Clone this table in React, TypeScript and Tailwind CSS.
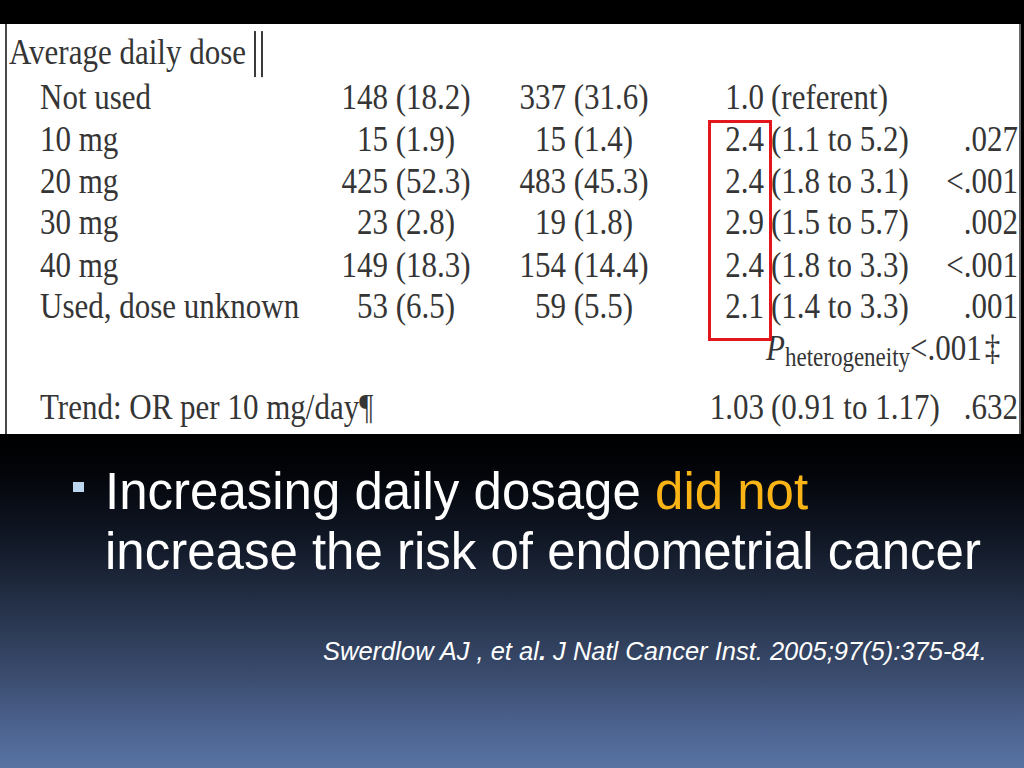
const serif = { fontFamily: '"Liberation Serif", "Times New Roman", serif' }

interface Row {
  label: string
  used: string
  controls: string
  or: string
  ci: string
  p: string
}

const rows: Row[] = [
  { label: 'Not used', used: '148 (18.2)', controls: '337 (31.6)', or: '1.0', ci: '(referent)', p: '' },
  { label: '10 mg', used: '15 (1.9)', controls: '15 (1.4)', or: '2.4', ci: '(1.1 to 5.2)', p: '.027' },
  { label: '20 mg', used: '425 (52.3)', controls: '483 (45.3)', or: '2.4', ci: '(1.8 to 3.1)', p: '<.001' },
  { label: '30 mg', used: '23 (2.8)', controls: '19 (1.8)', or: '2.9', ci: '(1.5 to 5.7)', p: '.002' },
  { label: '40 mg', used: '149 (18.3)', controls: '154 (14.4)', or: '2.4', ci: '(1.8 to 3.3)', p: '<.001' },
  { label: 'Used, dose unknown', used: '53 (6.5)', controls: '59 (5.5)', or: '2.1', ci: '(1.4 to 3.3)', p: '.001' },
]

function DoseRow({ row }: { row: Row }) {
  return (
    <div className="flex h-[35.4px] leading-[35.4px] pl-[33px] whitespace-nowrap">
      <div className="w-[296px]">{row.label}</div>
      <div className="w-[140px] text-center">{row.used}</div>
      <div className="w-[38px]" />
      <div className="w-[140px] text-center">{row.controls}</div>
      <div className="w-[110px] text-right">{row.or}</div>
      <div className="w-[180px] pl-[7px]">{row.ci}</div>
      <div className="w-[74px] text-right">{row.p}</div>
    </div>
  )
}

export default function App() {
  return (
    <div className="w-[1024px] h-[768px] overflow-hidden bg-black flex flex-col">
      <div className="h-[24px] bg-black" />

      <div className="h-[410px] w-[1021px] bg-white pl-[5px] border-r-2 border-[#6b6b6b]">
        <div className="relative h-full border-l-2 border-[#4a4a4a]">
          <div
            className="origin-top scale-y-[1.18] pt-[5.6px] text-[31px] text-[#353535]"
            style={serif}
          >
            <div className="h-[38.6px] leading-[35.6px] pl-[2px] whitespace-nowrap">
              Average daily dose
              <span className="inline-block ml-[8px] w-[9px] h-[39px] border-x-[2.5px] border-[#3a3a3a] align-[-11px]" />
            </div>
            {rows.map((r) => (
              <DoseRow key={r.label} row={r} />
            ))}
            <div className="flex h-[35.4px] leading-[35.4px] pl-[33px] whitespace-nowrap">
              <div className="w-[724px]" />
              <div className="pl-[2px]">
                <span className="italic">P</span>
                <sub className="text-[23px]">heterogeneity</sub>
                {'<.001'}
                <span className="ml-[3px]">{'\u2021'}</span>
              </div>
            </div>
            <div className="h-[15px]" />
            <div className="flex h-[35.4px] leading-[35.4px] pl-[33px] whitespace-nowrap">
              <div className="w-[614px]">Trend: OR per 10 mg/day{'\u00b6'}</div>
              <div className="w-[110px] text-right">1.03</div>
              <div className="w-[180px] pl-[7px]">(0.91 to 1.17)</div>
              <div className="w-[74px] text-right">.632</div>
            </div>
          </div>

          <div className="absolute left-[701px] top-[96px] w-[64px] h-[221px] border-[3px] border-[#e3161d]" />
        </div>
      </div>

      <div
        className="flex-1 bg-[linear-gradient(to_bottom,#000000_0%,#03050a_12%,#111826_32%,#253249_52%,#3a4b6d_72%,#4d6390_88%,#5873a3_100%)] pt-[28px]"
        style={{ fontFamily: '"Liberation Sans", Arial, sans-serif' }}
      >
        <div className="flex pl-[73px]">
          <div className="w-[11px] h-[10px] mt-[20px] bg-[#bcd6ef]" />
          <p className="ml-[21px] text-[51px] leading-[60px] text-white">
            Increasing daily dosage <span className="text-[#fbb415]">did not</span>
            <br />
            increase the risk of endometrial cancer
          </p>
        </div>
        <div className="mt-[54px] pl-[323px] text-[25.5px] leading-[30px] italic text-white whitespace-nowrap">
          Swerdlow AJ , et al<span className="font-bold">.</span> J Natl Cancer Inst. 2005;97(5):375-84.
        </div>
      </div>
    </div>
  )
}
